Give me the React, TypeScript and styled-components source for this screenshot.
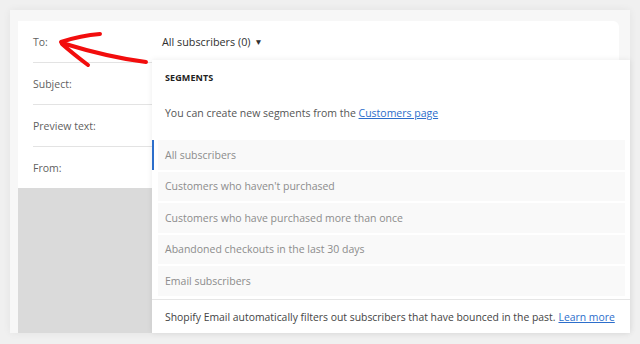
import React from "react";
import styled, { createGlobalStyle } from "styled-components";

const GlobalStyle = createGlobalStyle`
  html, body {
    margin: 0;
    padding: 0;
    background: #f0f0f0;
    font-family: "Open Sans", "Noto Sans", sans-serif;
  }
`;

const segments = [
  "All subscribers",
  "Customers who haven't purchased",
  "Customers who have purchased more than once",
  "Abandoned checkouts in the last 30 days",
  "Email subscribers",
];

const fields = ["To:", "Subject:", "Preview text:", "From:"];

const App: React.FC = (): JSX.Element => {
  return (
    <>
      <GlobalStyle />
      <Page>
        <Frame>
          <Editor>
            <FieldList>
              {fields.map((label, i) => (
                <FieldRow key={label} $last={i === fields.length - 1}>
                  <FieldLabel>{label}</FieldLabel>
                  {i === 0 && (
                    <RecipientPicker>
                      All subscribers (0) <Caret>▼</Caret>
                    </RecipientPicker>
                  )}
                </FieldRow>
              ))}
            </FieldList>
            <PreviewArea />
          </Editor>

          <Dropdown>
            <DropdownTitle>Segments</DropdownTitle>
            <DropdownHint>
              You can create new segments from the <Link>Customers page</Link>
            </DropdownHint>
            <SegmentList>
              {segments.map((s, i) => (
                <SegmentItem key={s} $selected={i === 0}>
                  {s}
                </SegmentItem>
              ))}
            </SegmentList>
            <DropdownFooter>
              Shopify Email automatically filters out subscribers that have
              bounced in the past. <Link>Learn more</Link>
            </DropdownFooter>
          </Dropdown>

          {/* hand drawn annotation */}
          <Arrow width="100" height="44" viewBox="0 0 100 44">
            <g
              fill="none"
              stroke="#f20d0d"
              strokeWidth="4"
              strokeLinecap="round"
              strokeLinejoin="round"
            >
              <path d="M 4 15 C 30 23, 55 30, 88 34" />
              <path d="M 3 14 C 15 10, 28 7, 42 6" />
              <path d="M 4 16 C 13 24, 22 31, 30 37" />
            </g>
          </Arrow>
        </Frame>
      </Page>
    </>
  );
};

export default App;

const Page = styled.div`
  width: 640px;
  height: 344px;
  padding: 10px 10px 11px 10px;
  box-sizing: border-box;
  overflow: hidden;
`;

const Frame = styled.div`
  position: relative;
  height: 100%;
  background: #f7f7f7;
  padding: 11px 11px 0 8px;
  box-sizing: border-box;
  box-shadow: 0 0 8px rgba(0, 0, 0, 0.06);
`;

const Editor = styled.div`
  display: flex;
  flex-direction: column;
  height: 100%;
  border-radius: 0 6px 0 0;
  overflow: hidden;
  background: #ffffff;
`;

const FieldList = styled.div`
  display: flex;
  flex-direction: column;
  padding-left: 15px;
`;

const FieldRow = styled.div<{ $last?: boolean }>`
  display: flex;
  align-items: center;
  height: 41px;
  border-bottom: ${(p) => (p.$last ? "none" : "1px solid #e3e3e3")};
`;

const FieldLabel = styled.span`
  width: 129px;
  font-size: 10.5px;
  color: #5f5f5f;
`;

const RecipientPicker = styled.span`
  font-size: 10.8px;
  color: #303030;
`;

const Caret = styled.span`
  font-size: 8.5px;
  margin-left: 1px;
  vertical-align: 1px;
`;

const PreviewArea = styled.div`
  flex: 1;
  background: #dadada;
`;

const Dropdown = styled.div`
  position: absolute;
  left: 142px;
  right: 0;
  top: 50px;
  bottom: 0;
  background: #ffffff;
  box-shadow: 0 0 6px rgba(0, 0, 0, 0.08);
  display: flex;
  flex-direction: column;
`;

const DropdownTitle = styled.div`
  padding: 11px 13px 0;
  height: 24px;
  font-size: 9px;
  font-weight: 700;
  letter-spacing: 0.1px;
  text-transform: uppercase;
  color: #222222;
  line-height: 14px;
`;

const DropdownHint = styled.div`
  padding: 11px 13px 0;
  height: 34px;
  font-size: 10.5px;
  color: #555555;
  line-height: 15px;
`;

const Link = styled.a`
  color: #2c6ecb;
  text-decoration: underline;
`;

const SegmentList = styled.div`
  display: flex;
  flex-direction: column;
  gap: 2px;
  padding: 0 5px 0 6px;
`;

const SegmentItem = styled.div<{ $selected?: boolean }>`
  position: relative;
  height: 29.5px;
  display: flex;
  align-items: center;
  padding-left: 7px;
  background: #f9f9f9;
  font-size: 10.5px;
  color: #8c8c8c;

  &::before {
    content: "";
    position: absolute;
    left: -6px;
    top: 0;
    bottom: 0;
    width: 2px;
    background: ${(p) => (p.$selected ? "#2c6ecb" : "transparent")};
  }
`;

const DropdownFooter = styled.div`
  margin-top: auto;
  border-top: 1px solid #e6e6e6;
  padding: 0 13px;
  height: 33px;
  display: flex;
  align-items: center;
  font-size: 10.4px;
  color: #444444;
  white-space: nowrap;

  a {
    margin-left: 3px;
  }
`;

const Arrow = styled.svg`
  position: absolute;
  left: 48px;
  top: 18px;
  pointer-events: none;
`;
